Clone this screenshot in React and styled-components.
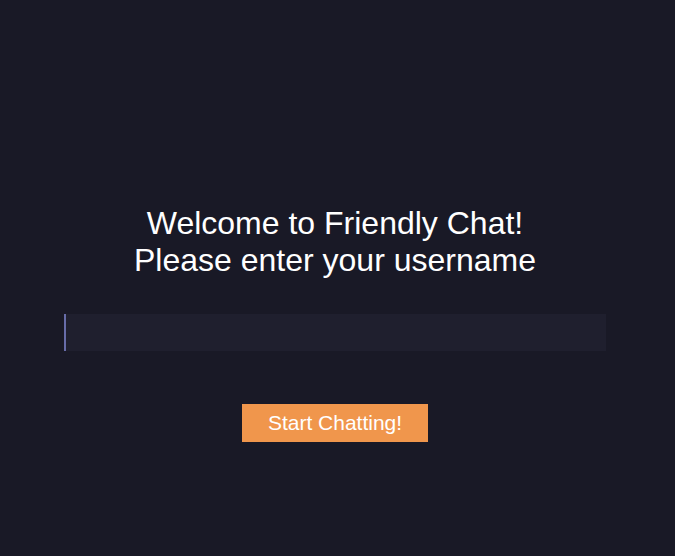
import React from "react";
import styled, { createGlobalStyle } from "styled-components";

const Global = createGlobalStyle`
  html, body { margin: 0; padding: 0; background: #191926; }
  body { font-family: "Liberation Sans", Arial, sans-serif; color: #ffffff; }
`;

const Page = styled.main`
  width: 670px;
  height: 556px;
  display: flex;
  flex-direction: column;
  align-items: center;
  padding-top: 205px;
  box-sizing: border-box;
`;

const Title = styled.h1`
  margin: 0 0 35px;
  font-size: 32px;
  font-weight: 400;
  line-height: 37px;
  text-align: center;
  color: #ffffff;
`;

const NameInput = styled.input`
  width: 542px;
  height: 37px;
  box-sizing: border-box;
  margin: 0 0 53px;
  padding: 0 10px;
  border: none;
  border-left: 2px solid #676ca8;
  background: #1f1f2e;
  color: #ffffff;
  font-family: inherit;
  font-size: 18px;
  outline: none;
`;

const StartButton = styled.button`
  width: 186px;
  height: 38px;
  border: none;
  background: #f0964c;
  color: #ffffff;
  font-family: "Liberation Sans", Arial, sans-serif;
  font-size: 21px;
  padding: 0;
  cursor: pointer;
`;

export default function App() {
  return (
    <>
      <Global />
      <Page>
        <Title>
          Welcome to Friendly Chat!
          <br />
          Please enter your username
        </Title>
        <NameInput type="text" />
        <StartButton>Start Chatting!</StartButton>
      </Page>
    </>
  );
}
